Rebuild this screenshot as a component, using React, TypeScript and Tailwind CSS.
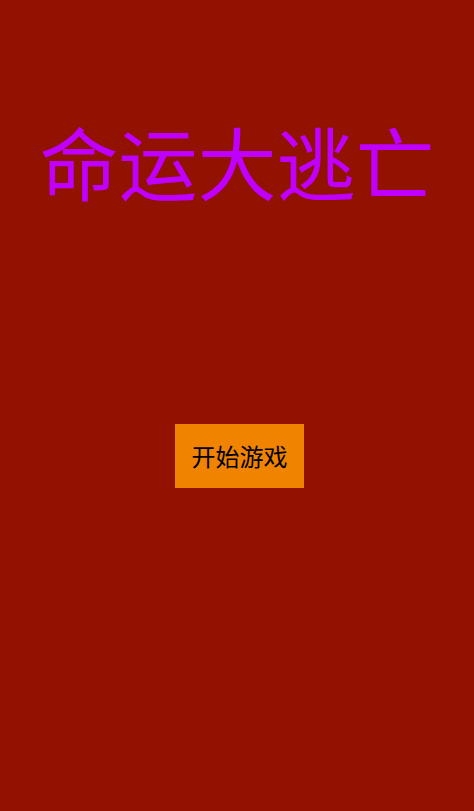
import React from 'react';

export default function App() {
  return (
    <div
      className="min-h-[811px] w-full bg-[#931100] flex flex-col items-center"
      style={{ fontFamily: '"Noto Sans CJK SC", "Noto Sans", sans-serif' }}
    >
      <h1 className="mt-[121px] text-[79px] leading-[79px] text-[#bf00ff] font-normal">
        命运大逃亡
      </h1>
      <button className="mt-[224px] ml-[5px] w-[129px] h-[64px] bg-[#f08400] text-black text-[24px] flex items-center justify-center">
        开始游戏
      </button>
    </div>
  );
}
